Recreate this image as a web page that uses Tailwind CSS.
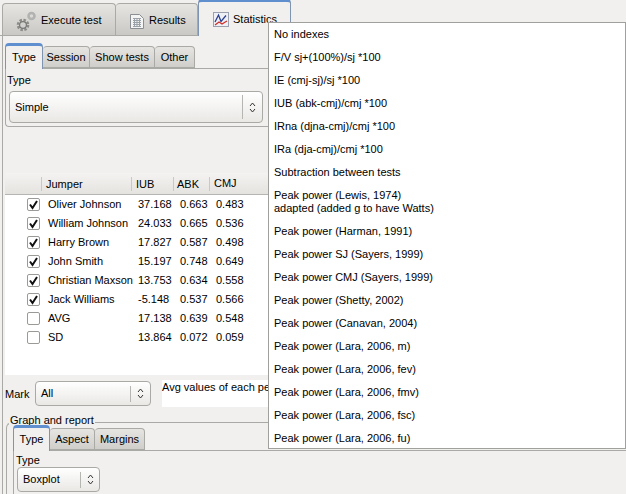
<!DOCTYPE html>
<html lang="en">
<head>
<meta charset="UTF-8">
<title>Statistics</title>
<script src="https://cdn.jsdelivr.net/npm/@tailwindcss/browser@4"></script>
</head>
<body class="m-0">
<div class="relative w-[626px] h-[494px] overflow-hidden bg-[#f1f0ee] font-['Liberation_Sans',sans-serif] text-[11px] text-black">

  <!-- main tabs -->
  <div class="flex h-[36px] pl-[2px] items-end border-b border-[#a9a9a6]">
    <div class="flex items-center gap-[4px] w-[114px] h-[32px] pl-[13px] pt-[1px] border border-b-0 border-[#a9a9a6] rounded-t bg-gradient-to-b from-[#e6e5e2] to-[#c9c8c5]">
      <svg width="21" height="21" viewBox="0 0 21 21" class="mt-[2px]">
        <circle cx="15.500" cy="5" r="3" fill="none" stroke="#b2b2b0" stroke-width="2.600"/>
        <circle cx="7" cy="14" r="5" fill="none" stroke="#8b8b89" stroke-width="2.600" stroke-dasharray="2.400 1.500"/>
        <circle cx="7" cy="14" r="3.400" fill="none" stroke="#777775" stroke-width="1.200"/>
      </svg>
      <span>Execute test</span>
    </div>
    <div class="flex items-center gap-[5px] w-[82px] h-[32px] pl-[14px] pt-[1px] border border-l-0 border-b-0 border-[#a9a9a6] rounded-t bg-gradient-to-b from-[#e6e5e2] to-[#c9c8c5]">
      <svg width="14" height="15" viewBox="0 0 14 15" class="mt-[2px]"><path d="M.5.500h9l4 4v10H.5z" fill="#f4f4f2" stroke="#8a8f94"/><path d="M3 4.500h8M3 6.500h8M3 8.500h8M3 10.500h8M3 12.500h8M4.500 4v9M7 4v9M9.500 4v9" stroke="#9aa1a8"/></svg>
      <span>Results</span>
    </div>
    <div class="relative -mb-px flex items-center gap-[4px] w-[93px] h-[37px] pl-[14px] border border-b-0 border-[#7f94b0] border-t-[3px] border-t-[#5f8fcf] rounded-t bg-[#f1f0ee]">
      <svg width="16" height="15" viewBox="0 0 16 15"><rect x=".5" y=".5" width="15" height="14" fill="#eef0f6" stroke="#9aa0ad"/><path d="M2 10 5.500 3 8 9.500l5-6" fill="none" stroke="#2b3f8f" stroke-width="1.300"/><path d="M2 13l4-3 3 2 5-3" fill="none" stroke="#d0302a" stroke-width="1.300"/></svg>
      <span>Statistics</span>
    </div>
  </div>

  <!-- content -->
  <div class="h-[458px] ml-[2px] border-l border-[#a9a9a6] pt-[7px]">
    <div class="flex h-[25px] pl-[2px] items-end">
      <div class="relative h-[26px] w-[38px] -mb-px z-10 flex items-center justify-center border border-b-0 border-[#7f94b0] border-t-[3px] border-t-[#5f8fcf] rounded-t bg-[#f1f0ee]">Type</div>
      <div class="h-[22px] w-[47px] flex items-center justify-center border border-l-0 border-[#a9a9a6] rounded-t bg-gradient-to-b from-[#e6e5e2] to-[#cfceca]">Session</div>
      <div class="h-[22px] w-[65px] flex items-center justify-center border border-l-0 border-[#a9a9a6] rounded-t bg-gradient-to-b from-[#e6e5e2] to-[#cfceca]">Show tests</div>
      <div class="h-[22px] w-[40px] flex items-center justify-center border border-l-0 border-[#a9a9a6] rounded-t bg-gradient-to-b from-[#e6e5e2] to-[#cfceca]">Other</div>
    </div>
    <div class="ml-[2px] h-[59px] border border-r-0 border-[#a9a9a6] rounded-bl pt-[5px] pl-[1px]">
      <div class="leading-[13px]">Type</div>
      <div class="mt-[4px] ml-[2px] w-[254px] h-[32px] flex items-center pl-[5px] border border-[#a9a9a6] rounded bg-gradient-to-b from-white to-[#e9e8e5]">
        <span class="flex-1">Simple</span>
        <span class="w-[20px] h-[24px] flex items-center justify-center border-l border-[#b5b5b2]">
          <svg width="7" height="11" viewBox="0 0 7 11"><path d="M1 4 3.500 1 6 4M1 7l2.500 3L6 7" fill="none" stroke="#333"/></svg>
        </span>
      </div>
    </div>

    <!-- table -->
    <div class="mt-[46px] ml-[2px] h-[202px] bg-white">
      <div class="flex h-[22px] items-center border-b border-[#b5b5b2] bg-gradient-to-b from-[#f4f3f1] to-[#e4e3e0]">
        <div class="w-[37px] h-[14px] border-r border-[#c8c8c4]"></div>
        <div class="w-[90px] pl-[4px] h-[14px] leading-[14px] border-r border-[#c8c8c4]">Jumper</div>
        <div class="w-[42px] pl-[4px] h-[14px] leading-[14px] border-r border-[#c8c8c4]">IUB</div>
        <div class="w-[36px] pl-[3px] h-[14px] leading-[14px] border-r border-[#c8c8c4]">ABK</div>
        <div class="pl-[4px]">CMJ</div>
      </div>
      <div id="rows"></div>
    </div>

    <!-- mark row -->
    <div class="flex h-[47px] pl-[2px]">
      <span class="mt-[12px] w-[30px] h-[14px] leading-[14px]">Mark</span>
      <div class="mt-[6px] w-[116px] h-[25px] flex items-center pl-[5px] border border-[#a9a9a6] rounded bg-gradient-to-b from-white to-[#e9e8e5]">
        <span class="flex-1">All</span>
        <span class="w-[20px] h-[16px] flex items-center justify-center border-l border-[#b5b5b2]">
          <svg width="7" height="11" viewBox="0 0 7 11"><path d="M1 4 3.500 1 6 4M1 7l2.500 3L6 7" fill="none" stroke="#333"/></svg>
        </span>
      </div>
      <div class="mt-[5px] ml-[11px] w-[107px] h-[27px] bg-white whitespace-nowrap leading-[13px] pt-[1px]">Avg values of each person</div>
    </div>

    <!-- graph and report -->
    <div class="relative ml-[3px] h-[72px] border border-r-0 border-b-0 border-[#a9a9a6] rounded-tl-md pl-[6px] pt-[2px]">
      <span class="absolute -top-[9px] left-[2px] px-[1px] bg-[#f1f0ee] leading-[13px]">Graph and report</span>
      <div class="flex h-[25px] items-end">
        <div class="relative h-[26px] w-[37px] -mb-px z-10 flex items-center justify-center border border-b-0 border-[#7f94b0] border-t-[3px] border-t-[#5f8fcf] rounded-t bg-[#f1f0ee]">Type</div>
        <div class="h-[22px] w-[45px] flex items-center justify-center border border-l-0 border-[#a9a9a6] rounded-t bg-gradient-to-b from-[#e6e5e2] to-[#cfceca]">Aspect</div>
        <div class="h-[22px] w-[50px] flex items-center justify-center border border-l-0 border-[#a9a9a6] rounded-t bg-gradient-to-b from-[#e6e5e2] to-[#cfceca]">Margins</div>
      </div>
      <div class="border-t border-l border-[#a9a9a6] pl-[2px] pt-[3px] h-[46px]">
        <div class="leading-[13px]">Type</div>
        <div class="ml-[1px] w-[83px] h-[25px] flex items-center pl-[5px] border border-[#a9a9a6] rounded bg-gradient-to-b from-white to-[#e9e8e5]">
          <span class="flex-1">Boxplot</span>
          <span class="w-[19px] h-[16px] flex items-center justify-center border-l border-[#b5b5b2]">
            <svg width="7" height="11" viewBox="0 0 7 11"><path d="M1 4 3.500 1 6 4M1 7l2.500 3L6 7" fill="none" stroke="#333"/></svg>
          </span>
        </div>
      </div>
    </div>
  </div>

  <!-- dropdown list, over the page -->
  <div id="menu" class="absolute z-20 left-[268px] top-[22px] w-[358px] h-[427px] bg-white border border-[#a0a09d] pl-[5px]"></div>
</div>

<script>
  const rows = [
    [true, 'Oliver Johnson', '37.168', '0.663', '0.483'],
    [true, 'William Johnson', '24.033', '0.665', '0.536'],
    [true, 'Harry Brown', '17.827', '0.587', '0.498'],
    [true, 'John Smith', '15.197', '0.748', '0.649'],
    [true, 'Christian Maxson', '13.753', '0.634', '0.558'],
    [true, 'Jack Williams', '-5.148', '0.537', '0.566'],
    [false, 'AVG', '17.138', '0.639', '0.548'],
    [false, 'SD', '13.864', '0.072', '0.059'],
  ];
  const tick = '<svg width="11" height="11" viewBox="0 0 11 11"><path d="M2 5.500 4.500 9 9 2" fill="none" stroke="#111" stroke-width="2"/></svg>';
  document.getElementById('rows').innerHTML = rows.map(r => `
    <div class="flex h-[19px] items-center">
      <div class="w-[38px] flex justify-end pr-[3px]"><span class="w-[13px] h-[13px] border border-[#9a9a97] rounded-[2px] flex items-center justify-center bg-white">${r[0] ? tick : ''}</span></div>
      <div class="w-[91px] pl-[5px] whitespace-nowrap">${r[1]}</div>
      <div class="w-[42px] pl-[4px]">${r[2]}</div>
      <div class="w-[37px] pl-[4px]">${r[3]}</div>
      <div class="pl-[3px]">${r[4]}</div>
    </div>`).join('');

  const items = ['No indexes', 'F/V sj+(100%)/sj *100', 'IE (cmj-sj)/sj *100', 'IUB (abk-cmj)/cmj *100', 'IRna (djna-cmj)/cmj *100', 'IRa (dja-cmj)/cmj *100', 'Subtraction between tests', 'Peak power (Lewis, 1974)<br>adapted (added g to have Watts)', 'Peak power (Harman, 1991)', 'Peak power SJ (Sayers, 1999)', 'Peak power CMJ (Sayers, 1999)', 'Peak power (Shetty, 2002)', 'Peak power (Canavan, 2004)', 'Peak power (Lara, 2006, m)', 'Peak power (Lara, 2006, fev)', 'Peak power (Lara, 2006, fmv)', 'Peak power (Lara, 2006, fsc)', 'Peak power (Lara, 2006, fu)'];
  document.getElementById('menu').innerHTML = items.map(t => `<div class="${t.includes('<br>') ? 'h-[36px]' : 'h-[23px]'} flex items-center leading-[13px]"><span>${t}</span></div>`).join('');
</script>
</body>
</html>
